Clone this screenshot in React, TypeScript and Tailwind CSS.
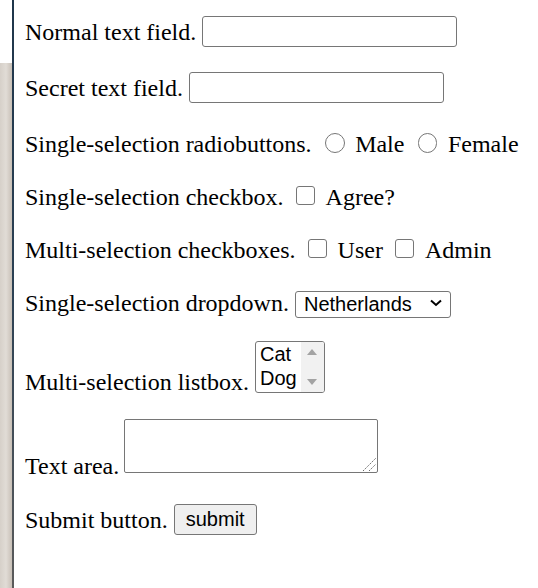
import React from "react";

function Radio() {
  return (
    <span className="ml-[13.5px] mr-[10.5px] mb-[2px] inline-block w-[19.5px] h-[19.5px] rounded-full border border-[#767676] bg-white shrink-0" />
  );
}

function Check({ ml = 12 }: { ml?: number }) {
  return (
    <span
      className={
        (ml === 12 ? "ml-[12px]" : "ml-[12px]") +
        " mr-[10.5px] mb-[3px] inline-block w-[19.5px] h-[19.5px] rounded-[3px] border border-[#767676] bg-white shrink-0"
      }
    />
  );
}

export default function App() {
  return (
    <div className="flex w-[538px] h-[588px] bg-white text-black">
      <div className="w-[12px] flex flex-col shrink-0">
        <div className="h-[63px] bg-white" />
        <div className="flex-1 bg-linear-to-r from-[#d6d0c9] via-[#e1dcd6] to-[#c8c0b7]" />
      </div>
      <div className="w-[2px] shrink-0 bg-linear-to-b from-[#1f364b] via-[#2c4154] to-[#5b5b5b]" />
      <div className="flex flex-col pl-[11px] pt-[16px] font-['Liberation_Serif','Times_New_Roman',serif] text-[24px] leading-[28px]">
        {/* Row 1 */}
        <div className="flex items-center h-[31px]">
          <span>Normal text field.</span>
          <input
            type="text"
            className="ml-[6px] w-[255px] h-[31px] border border-[#767676] rounded-[3px] bg-white px-[3px] font-['Liberation_Sans',Arial,sans-serif] text-[20px] outline-none"
          />
        </div>
        {/* Row 2 */}
        <div className="flex items-center h-[31px] mt-[25px]">
          <span>Secret text field.</span>
          <input
            type="password"
            className="ml-[6px] w-[255px] h-[31px] border border-[#767676] rounded-[3px] bg-white px-[3px] font-['Liberation_Sans',Arial,sans-serif] text-[20px] outline-none"
          />
        </div>
        {/* Row 3 */}
        <div className="flex items-center h-[32px] mt-[25px] whitespace-nowrap">
          <span>Single-selection radiobuttons.</span>
          <Radio />
          <span>Male</span>
          <Radio />
          <span>Female</span>
        </div>
        {/* Row 4 */}
        <div className="flex items-center h-[32px] mt-[21px] whitespace-nowrap">
          <span>Single-selection checkbox.</span>
          <Check />
          <span>Agree?</span>
        </div>
        {/* Row 5 */}
        <div className="flex items-center h-[32px] mt-[21px] whitespace-nowrap">
          <span>Multi-selection checkboxes.</span>
          <Check />
          <span>User</span>
          <Check />
          <span>Admin</span>
        </div>
        {/* Row 6 */}
        <div className="flex items-center h-[27px] mt-[23px] whitespace-nowrap">
          <span>Single-selection dropdown.</span>
          <div className="relative ml-[6px] w-[156px] h-[27px]">
            <select
              defaultValue="Netherlands"
              className="appearance-none w-full h-full border border-[#767676] rounded-[3px] bg-white pl-[8px] pr-[24px] font-['Liberation_Sans',Arial,sans-serif] text-[20px] leading-[23px] outline-none"
            >
              <option>Netherlands</option>
              <option>Belgium</option>
              <option>Germany</option>
            </select>
            <svg
              className="absolute right-[9px] top-[10px] pointer-events-none"
              width="12"
              height="8"
              viewBox="0 0 12 8"
            >
              <path d="M1 1.5 L6 6 L11 1.5" fill="none" stroke="#000" strokeWidth="2" />
            </svg>
          </div>
        </div>
        {/* Row 7 */}
        <div className="flex items-end h-[52px] mt-[25px] whitespace-nowrap">
          <span className="leading-[22px]">Multi-selection listbox.</span>
          <div className="ml-[6px] w-[70px] h-[52px] border border-[#767676] rounded-[3px] bg-white flex overflow-hidden">
            <div className="flex-1 flex flex-col pl-[4px] font-['Liberation_Sans',Arial,sans-serif] text-[20px] leading-[24px]">
              <span>Cat</span>
              <span>Dog</span>
            </div>
            <div className="w-[23px] h-full bg-[#f1f1f1] flex flex-col items-center justify-between py-[7px]">
              <svg width="10" height="6" viewBox="0 0 10 6">
                <path d="M0 6 L5 0 L10 6 Z" fill="#a3a3a3" />
              </svg>
              <svg width="10" height="6" viewBox="0 0 10 6">
                <path d="M0 0 L10 0 L5 6 Z" fill="#a3a3a3" />
              </svg>
            </div>
          </div>
        </div>
        {/* Row 8 */}
        <div className="flex items-end h-[54px] mt-[26px] whitespace-nowrap">
          <span className="leading-[14px]">Text area.</span>
          <div className="relative ml-[5px] w-[254px] h-[54px]">
            <textarea className="block w-full h-full resize-none border border-[#767676] rounded-[2px] bg-white outline-none" />
            <svg
              className="absolute right-[1px] bottom-[1px] pointer-events-none"
              width="16"
              height="16"
              viewBox="0 0 16 16"
            >
              <path d="M2 15 L15 2" stroke="#6b6b6b" strokeWidth="1" strokeDasharray="1.5 1" />
              <path d="M8 15 L15 8" stroke="#6b6b6b" strokeWidth="1" strokeDasharray="1.5 1" />
            </svg>
          </div>
        </div>
        {/* Row 9 */}
        <div className="flex items-center h-[31px] mt-[31px] whitespace-nowrap">
          <span>Submit button.</span>
          <button
            type="button"
            className="ml-[6px] w-[83px] h-[31px] border border-[#767676] rounded-[3px] bg-[#efefef] font-['Liberation_Sans',Arial,sans-serif] text-[20px] leading-[23px] text-black"
          >
            submit
          </button>
        </div>
      </div>
    </div>
  );
}
